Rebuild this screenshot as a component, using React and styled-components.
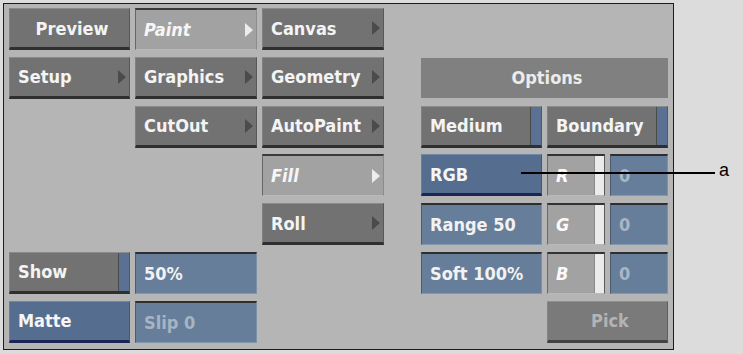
import React from "react";
import styled, { createGlobalStyle, css } from "styled-components";

const GlobalStyle = createGlobalStyle`
  body {
    margin: 0;
    background: #dcdcdc;
    font-family: "DejaVu Sans Condensed", "DejaVu Sans", sans-serif;
  }
`;

const Page = styled.div`
  position: relative;
  width: 743px;
  height: 354px;
  padding: 3px;
  box-sizing: border-box;
`;

const Panel = styled.div`
  width: 671px;
  height: 347px;
  box-sizing: border-box;
  border: 1px solid #1c1c1c;
  background: #b5b5b5;
  display: flex;
  gap: 37px;
  padding: 4px 0 0 5px;
`;

const Grid = styled.div`
  display: grid;
  grid-template-columns: ${(p) => p.$cols};
  grid-template-rows: repeat(7, 42px);
  row-gap: 6.8px;
  column-gap: 5px;
`;

const variants = {
  gray: css`
    background: #727272;
    color: #f4f4f4;
    border-top: 1px solid #8b8b8b;
    border-left: 1px solid #808080;
    border-right: 1px solid #585858;
    border-bottom: 3px solid #2f2f2f;
  `,
  pressed: css`
    background: #a2a2a2;
    color: #f6f6f6;
    border-top: 2px solid #3a3a3a;
    border-left: 1px solid #666;
    border-right: 1px solid #8c8c8c;
    border-bottom: 1px solid #b9b9b9;
  `,
  blue: css`
    background: #556d8f;
    color: #f6f6f6;
    border-top: 1px solid #7187a6;
    border-left: 1px solid #6a7f9c;
    border-right: 1px solid #44587a;
    border-bottom: 3px solid #1d2556;
  `,
  field: css`
    background: #667e99;
    color: #f2f2f2;
    border-top: 2px solid #2e2e2e;
    border-left: 1px solid #4b5b70;
    border-right: 1px solid #7d92aa;
    border-bottom: 1px solid #8497ad;
  `,
  swatch: css`
    background: #a2a2a2;
    color: #fafafa;
    border-top: 2px solid #333;
    border-left: 1px solid #6a6a6a;
    border-right: 1px solid #5a5a5a;
    border-bottom: 1px solid #b9b9b9;
  `,
  disabled: css`
    background: #7a7a7a;
    color: #b4b4b4;
    border-top: 1px solid #8f8f8f;
    border-left: 1px solid #858585;
    border-right: 1px solid #5e5e5e;
    border-bottom: 3px solid #424242;
  `,
  header: css`
    background: #808080;
    color: #ececec;
    height: 40px;
    align-self: center;
  `,
};

const Btn = styled.div`
  grid-column: ${(p) => p.$col || "auto"};
  grid-row: ${(p) => p.$row};
  box-sizing: border-box;
  display: flex;
  align-items: center;
  justify-content: ${(p) => (p.$center ? "center" : "flex-start")};
  padding: 0 ${(p) => (p.$tight ? "0" : "3px")} 0 8px;
  font-size: 18px;
  font-weight: bold;
  font-style: ${(p) => (p.$italic ? "italic" : "normal")};
  white-space: nowrap;
  overflow: hidden;
  ${(p) => variants[p.$v]}
`;

const Label = styled.span`
  flex: ${(p) => (p.$grow ? "1 1 auto" : "0 1 auto")};
  min-width: 0;
  color: ${(p) => p.$dim || "inherit"};
`;

const Arrow = styled.span`
  flex-shrink: 0;
  margin-left: auto;
  width: 0;
  height: 0;
  border-left: 8px solid ${(p) => (p.$light ? "#ececec" : "#4b4b4b")};
  border-top: 7px solid transparent;
  border-bottom: 7px solid transparent;
`;

const Strip = styled.span`
  flex-shrink: 0;
  align-self: stretch;
  width: ${(p) => p.$w}px;
  background: ${(p) => p.$bg};
  border-left: 1px solid ${(p) => p.$edge};
`;

const Callout = styled.div`
  position: absolute;
  left: 521px;
  top: 172px;
  width: 194px;
  height: 2px;
  background: #000;
`;

const CalloutLabel = styled.span`
  position: absolute;
  left: 719px;
  top: 160px;
  font: 18px "Liberation Sans", Arial, sans-serif;
  color: #000;
`;

function MenuBtn({ row, col, label, arrow, pressed }) {
  return (
    <Btn $row={row} $col={col} $v={pressed ? "pressed" : "gray"} $italic={pressed}>
      <Label>{label}</Label>
      {arrow && <Arrow $light={pressed} />}
    </Btn>
  );
}

function ToggleBtn({ row, col, label }) {
  return (
    <Btn $row={row} $col={col} $v="gray" $tight>
      <Label $grow>{label}</Label>
      <Strip $w={10} $bg="#5b7194" $edge="#4a4a4a" />
    </Btn>
  );
}

function Swatch({ row, letter }) {
  return (
    <Btn $row={row} $col="2" $v="swatch" $italic $tight>
      <Label $grow>{letter}</Label>
      <Strip $w={9} $bg="#ebebeb" $edge="#8a8a8a" />
    </Btn>
  );
}

export default function App() {
  return (
    <Page>
      <GlobalStyle />
      <Panel>
        <Grid $cols="121px 122px 122px">
          <Btn $row="1" $col="1" $v="gray" $center>Preview</Btn>
          <MenuBtn row="1" col="2" label="Paint" arrow pressed />
          <MenuBtn row="1" col="3" label="Canvas" arrow />
          <MenuBtn row="2" col="1" label="Setup" arrow />
          <MenuBtn row="2" col="2" label="Graphics" arrow />
          <MenuBtn row="2" col="3" label="Geometry" arrow />
          <MenuBtn row="3" col="2" label="CutOut" arrow />
          <MenuBtn row="3" col="3" label="AutoPaint" arrow />
          <MenuBtn row="4" col="3" label="Fill" arrow pressed />
          <MenuBtn row="5" col="3" label="Roll" arrow />
          <ToggleBtn row="6" col="1" label="Show" />
          <Btn $row="6" $col="2" $v="field">50%</Btn>
          <Btn $row="7" $col="1" $v="blue">Matte</Btn>
          <Btn $row="7" $col="2" $v="field">
            <Label $dim="#a7b4c4">Slip 0</Label>
          </Btn>
        </Grid>
        <Grid $cols="121px 58px 58px">
          <Btn $row="2" $col="1 / -1" $v="header" $center>Options</Btn>
          <ToggleBtn row="3" col="1" label="Medium" />
          <ToggleBtn row="3" col="2 / 4" label="Boundary" />
          <Btn $row="4" $col="1" $v="blue">RGB</Btn>
          <Swatch row="4" letter="R" />
          <Btn $row="4" $col="3" $v="field">
            <Label $dim="#a9b6c6">0</Label>
          </Btn>
          <Btn $row="5" $col="1" $v="field">Range 50</Btn>
          <Swatch row="5" letter="G" />
          <Btn $row="5" $col="3" $v="field">
            <Label $dim="#a9b6c6">0</Label>
          </Btn>
          <Btn $row="6" $col="1" $v="field">Soft 100%</Btn>
          <Swatch row="6" letter="B" />
          <Btn $row="6" $col="3" $v="field">
            <Label $dim="#a9b6c6">0</Label>
          </Btn>
          <Btn $row="7" $col="2 / 4" $v="disabled" $center>Pick</Btn>
        </Grid>
      </Panel>
      <Callout />
      <CalloutLabel>a</CalloutLabel>
    </Page>
  );
}
